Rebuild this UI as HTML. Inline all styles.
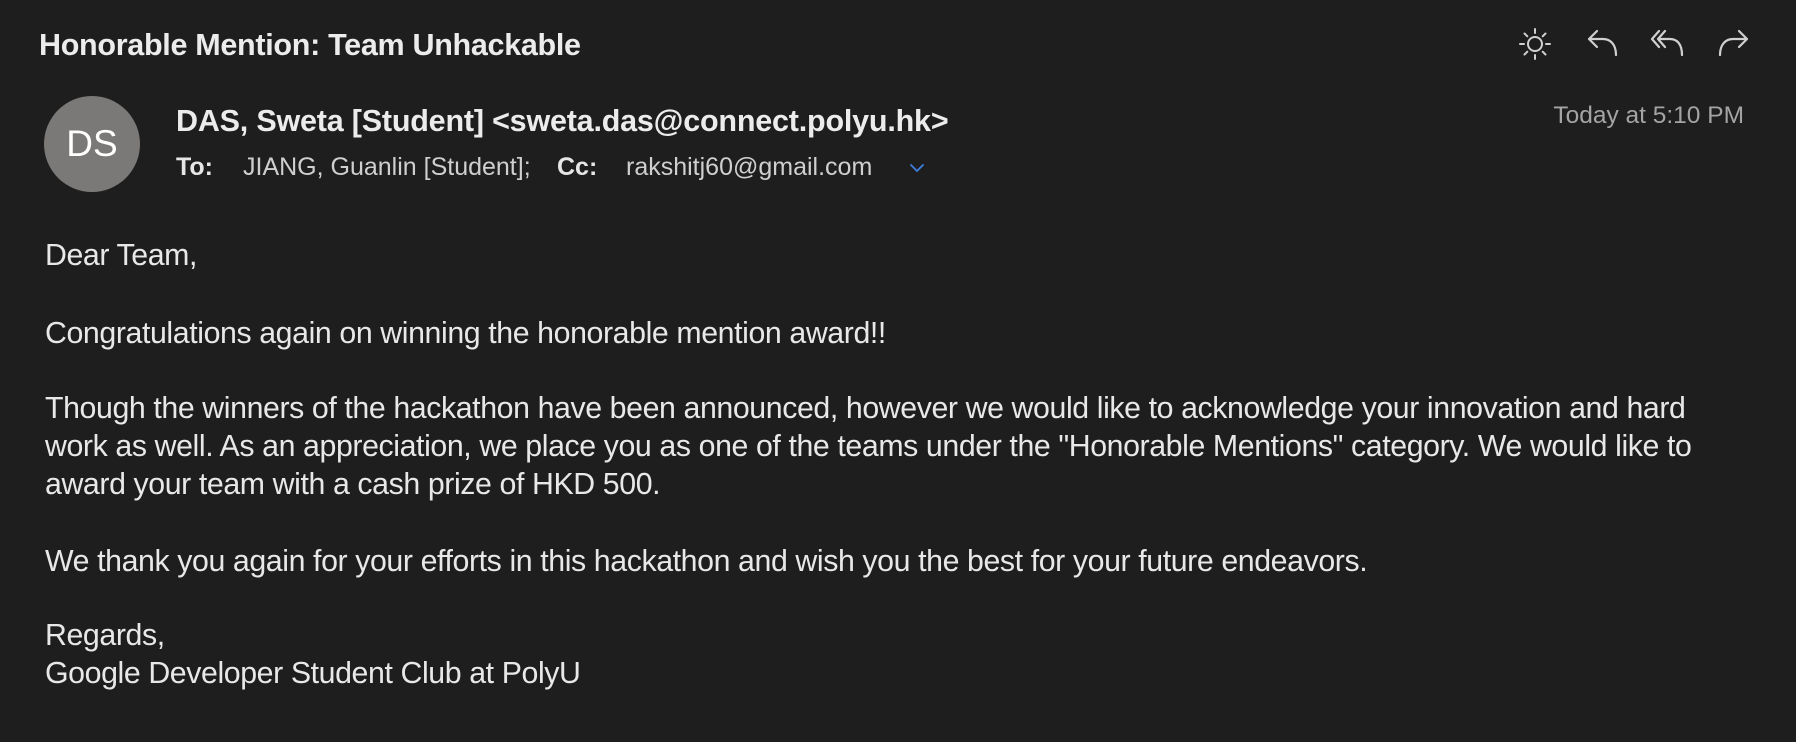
<!DOCTYPE html>
<html><head><meta charset="utf-8"><style>
html,body{margin:0;padding:0;background:#1e1e1e;width:1796px;height:742px;overflow:hidden;font-family:"Liberation Sans",sans-serif;}
.a{position:absolute;white-space:nowrap;line-height:1;}
.title{left:39px;top:30px;font-size:30.5px;font-weight:bold;color:#ececec;letter-spacing:-0.3px;}
.av{position:absolute;left:44px;top:96px;width:96px;height:96px;border-radius:50%;background:#7b7977;color:#fff;font-size:37px;text-align:center;line-height:96px;}
.from{left:176px;top:106px;font-size:30.5px;font-weight:bold;color:#ececec;letter-spacing:-0.2px;}
.to{top:155px;font-size:25px;color:#cfcfcf;}
.b{font-weight:bold;color:#e6e6e6;}
.date{right:52px;top:104px;font-size:24.5px;color:#a4a4a4;}
.body{position:absolute;left:45px;font-size:30.3px;color:#e8e8e8;white-space:nowrap;letter-spacing:-0.4px;}
svg{position:absolute;}
</style></head><body>
<div class="a title">Honorable Mention: Team Unhackable</div>
<svg style="left:1517px;top:26px" width="36" height="36" viewBox="0 0 36 36" fill="none" stroke="#d0d0d0" stroke-width="2" stroke-linecap="round"><circle cx="18" cy="18" r="7"/><path d="M18 3v4M18 29v4M3 18h4M29 18h4M7.5 7.5l2.8 2.8M25.7 25.7l2.8 2.8M7.5 28.5l2.8-2.8M25.7 10.3l2.8-2.8"/></svg>
<svg style="left:1586px;top:28px" width="34" height="30" viewBox="0 0 34 30" fill="none" stroke="#d0d0d0" stroke-width="2.2" stroke-linecap="round" stroke-linejoin="round"><path d="M11 3L3 11l8 8M3 11h14c7 0 13 5 13 16"/></svg>
<svg style="left:1650px;top:28px" width="36" height="30" viewBox="0 0 36 30" fill="none" stroke="#d0d0d0" stroke-width="2.2" stroke-linecap="round" stroke-linejoin="round"><path d="M9 3L2 11l7 8M15 3L8 11l7 8M8 11h12c7 0 12 5 12 16"/></svg>
<svg style="left:1716px;top:28px" width="34" height="30" viewBox="0 0 34 30" fill="none" stroke="#d0d0d0" stroke-width="2.2" stroke-linecap="round" stroke-linejoin="round"><path d="M23 3l8 8-8 8M31 11H17C10 11 4 16 4 27"/></svg>
<div class="av">DS</div>
<div class="a from">DAS, Sweta [Student] &lt;sweta.das@connect.polyu.hk&gt;</div>
<div class="a to b" style="left:176px">To:</div>
<div class="a to" style="left:243px">JIANG, Guanlin [Student];</div>
<div class="a to b" style="left:557px">Cc:</div>
<div class="a to" style="left:626px">rakshitj60@gmail.com</div>
<svg style="left:908px;top:162px" width="18" height="12" viewBox="0 0 18 12" fill="none" stroke="#3d7fe0" stroke-width="1.8" stroke-linecap="round"><path d="M3 3l6 6 6-6"/></svg>
<div class="a date">Today at 5:10 PM</div>
<div class="body" style="top:239px">Dear Team,</div>
<div class="body" style="top:317px">Congratulations again on winning the honorable mention award!!</div>
<div class="body" style="top:390px;line-height:38px">Though the winners of the hackathon have been announced, however we would like to acknowledge your innovation and hard<br>work as well. As an appreciation, we place you as one of the teams under the "Honorable Mentions" category. We would like to<br>award your team with a cash prize of HKD 500.</div>
<div class="body" style="top:545px">We thank you again for your efforts in this hackathon and wish you the best for your future endeavors.</div>
<div class="body" style="top:617px;line-height:38px">Regards,<br>Google Developer Student Club at PolyU</div>
</body></html>
